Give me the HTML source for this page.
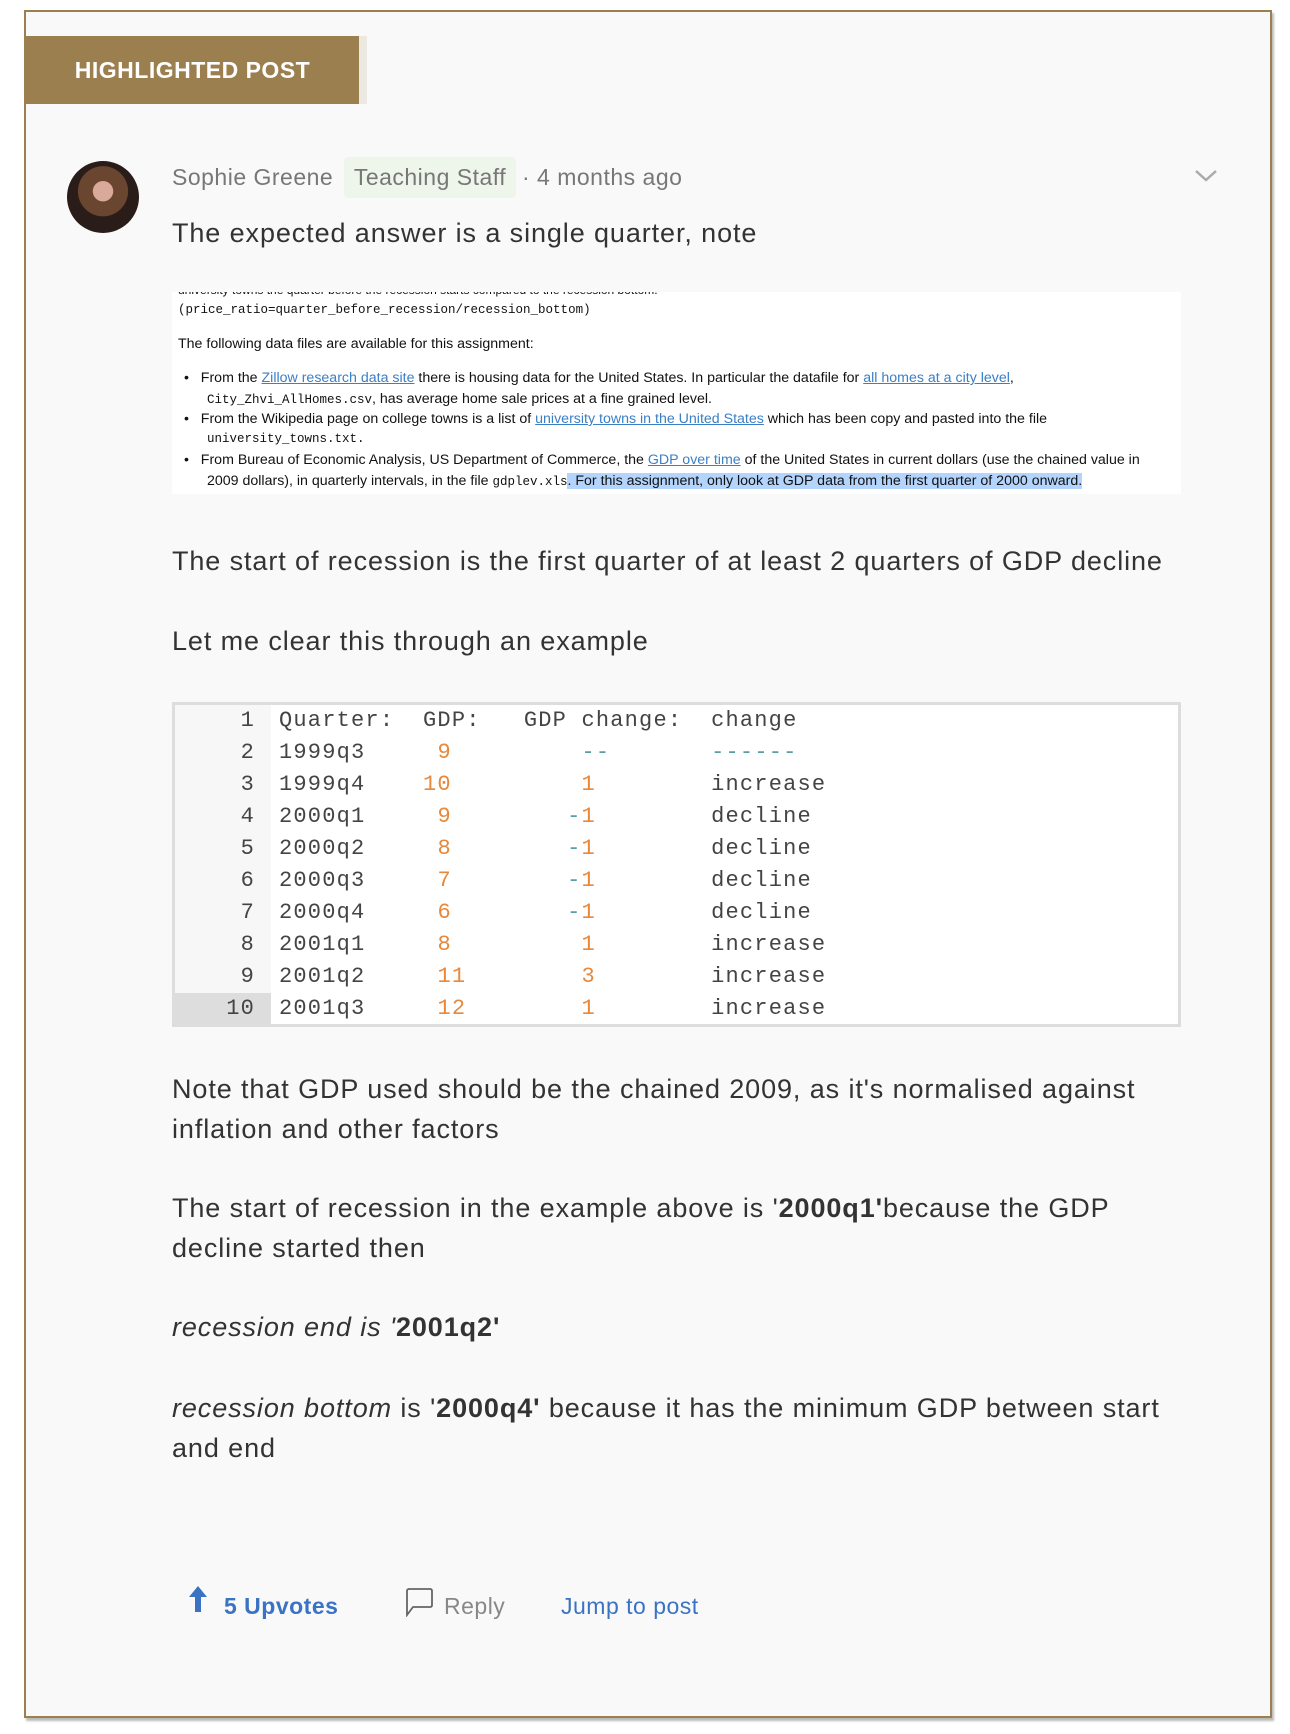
<!DOCTYPE html>
<html><head><meta charset="utf-8"><style>
body{margin:0;width:1290px;height:1734px;background:#fff;font-family:"Liberation Sans",sans-serif;position:relative;overflow:hidden}
.card{position:absolute;left:24px;top:10px;width:1244px;height:1704px;border:2px solid #9c7f4e;background:#f9f9f9;box-shadow:2px 3px 2px #bbb}
.ab{position:absolute;white-space:nowrap}
.banner{left:0;top:24px;width:333px;height:68px;background:#9c7f4e;color:#fff;font-weight:bold;font-size:23px;line-height:68px;text-align:center;letter-spacing:.5px;border-right:8px solid #ece8e2}
.p{position:absolute;left:146px;font-size:27px;letter-spacing:.9px;color:#333;white-space:nowrap}
.shot{position:absolute;left:146px;top:280px;width:1009px;height:202px;background:#fff;overflow:hidden;font-size:14.2px;color:#111}
.shot div{position:absolute;white-space:nowrap}
.shot a{color:#3b7fc4;text-decoration:underline}
.m{font-family:"Liberation Mono",monospace;font-size:12.5px}
.code{position:absolute;left:146px;top:690px;width:1003px;height:319px;border:3px solid #ddd;background:#fff}
.gut{position:absolute;left:0;top:0;width:96px;height:319px;background:#f7f7f7}
pre{margin:0;position:absolute;font-family:"Liberation Mono",monospace;font-size:22px;letter-spacing:1.2px;line-height:32px;color:#444}
.o{color:#e8883a}.t{color:#5a9ca0}
.f{font-size:23px;letter-spacing:.5px}
</style></head><body>
<div class="card">
<div class="ab banner">HIGHLIGHTED POST</div>
<div class="ab" style="left:41px;top:149px;width:72px;height:72px;border-radius:50%;background:radial-gradient(circle at 50% 42%,#d9a99a 0 18%,#6a4530 19% 45%,#2a1c18 46%);"></div>
<div class="ab f" style="left:146px;top:145px;line-height:41px;color:#777">Sophie Greene</div>
<div class="ab f" style="left:318px;top:145px;width:172px;height:41px;background:#eef5ea;border-radius:4px;color:#777;line-height:41px;text-align:center">Teaching Staff</div>
<div class="ab f" style="left:496px;top:145px;line-height:41px;color:#777">· 4 months ago</div>
<svg class="ab" style="left:1168px;top:156px" width="24" height="16"><path d="M2 3 L12 12 L22 3" stroke="#aaa" stroke-width="2.5" fill="none"/></svg>
<div class="p" style="top:206px">The expected answer is a single quarter, note</div>
<div class="shot">
<div style="top:-9px;left:6px;font-size:12px">university towns the quarter before the recession starts compared to the recession bottom.</div>
<div class="m" style="top:11px;left:6px">(price_ratio=quarter_before_recession/recession_bottom)</div>
<div style="top:44px;left:6px">The following data files are available for this assignment:</div>
<div style="top:78px;left:12px">•&nbsp;&nbsp; From the <a>Zillow research data site</a> there is housing data for the United States. In particular the datafile for <a>all homes at a city level</a>,</div>
<div style="top:99px;left:35px"><span class="m">City_Zhvi_AllHomes.csv</span>, has average home sale prices at a fine grained level.</div>
<div style="top:119px;left:12px">•&nbsp;&nbsp; From the Wikipedia page on college towns is a list of <a>university towns in the United States</a> which has been copy and pasted into the file</div>
<div style="top:140px;left:35px" class="m">university_towns.txt.</div>
<div style="top:160px;left:12px">•&nbsp;&nbsp; From Bureau of Economic Analysis, US Department of Commerce, the <a>GDP over time</a> of the United States in current dollars (use the chained value in</div>
<div style="top:181px;left:35px">2009 dollars), in quarterly intervals, in the file <span class="m">gdplev.xls</span><span style="background:#b3d4fc">. For this assignment, only look at GDP data from the first quarter of 2000 onward.</span></div>
</div>
<div class="p" style="top:534px">The start of recession is the first quarter of at least 2 quarters of GDP decline</div>
<div class="p" style="top:614px">Let me clear this through an example</div>
<div class="code"><div class="gut"></div><div class="ab" style="left:0;top:288px;width:96px;height:31px;background:#ddd"></div>
<pre style="left:0;top:0;width:80px;text-align:right">1
2
3
4
5
6
7
8
9
10</pre>
<pre style="left:104px;top:0">Quarter:  GDP:   GDP change:  change
1999q3     <span class="o">9</span>         <span class="t">--</span>       <span class="t">------</span>
1999q4    <span class="o">10</span>         <span class="o">1</span>        increase
2000q1     <span class="o">9</span>        <span class="t">-</span><span class="o">1</span>        decline
2000q2     <span class="o">8</span>        <span class="t">-</span><span class="o">1</span>        decline
2000q3     <span class="o">7</span>        <span class="t">-</span><span class="o">1</span>        decline
2000q4     <span class="o">6</span>        <span class="t">-</span><span class="o">1</span>        decline
2001q1     <span class="o">8</span>         <span class="o">1</span>        increase
2001q2     <span class="o">11</span>        <span class="o">3</span>        increase
2001q3     <span class="o">12</span>        <span class="o">1</span>        increase</pre></div>
<div class="p" style="top:1057px;line-height:40px">Note that GDP used should be the chained 2009, as it's normalised against<br>inflation and other factors</div>
<div class="p" style="top:1176px;line-height:40px">The start of recession in the example above is '<b>2000q1'</b>because the GDP<br>decline started then</div>
<div class="p" style="top:1300px"><i>recession end is '</i><b>2001q2'</b></div>
<div class="p" style="top:1376px;line-height:40px"><i>recession bottom</i> is '<b>2000q4'</b> because it has the minimum GDP between start<br>and end</div>
<svg class="ab" style="left:161px;top:1573px" width="22" height="28"><path d="M11 1 L20 12 L14 12 L14 27 L8 27 L8 12 L2 12 Z" fill="#3b73c4"/></svg>
<div class="ab f" style="left:198px;top:1581px;font-weight:bold;color:#3b73c4">5 Upvotes</div>
<svg class="ab" style="left:378px;top:1575px" width="30" height="30"><path d="M4 2 H26 Q28 2 28 4 V18 Q28 20 26 20 H9 L3 28 V4 Q3 2 5 2 Z" stroke="#666" stroke-width="1.8" fill="none"/></svg>
<div class="ab f" style="left:418px;top:1581px;color:#888">Reply</div>
<div class="ab f" style="left:535px;top:1581px;color:#3b73c4">Jump to post</div>
</div>
</body></html>
